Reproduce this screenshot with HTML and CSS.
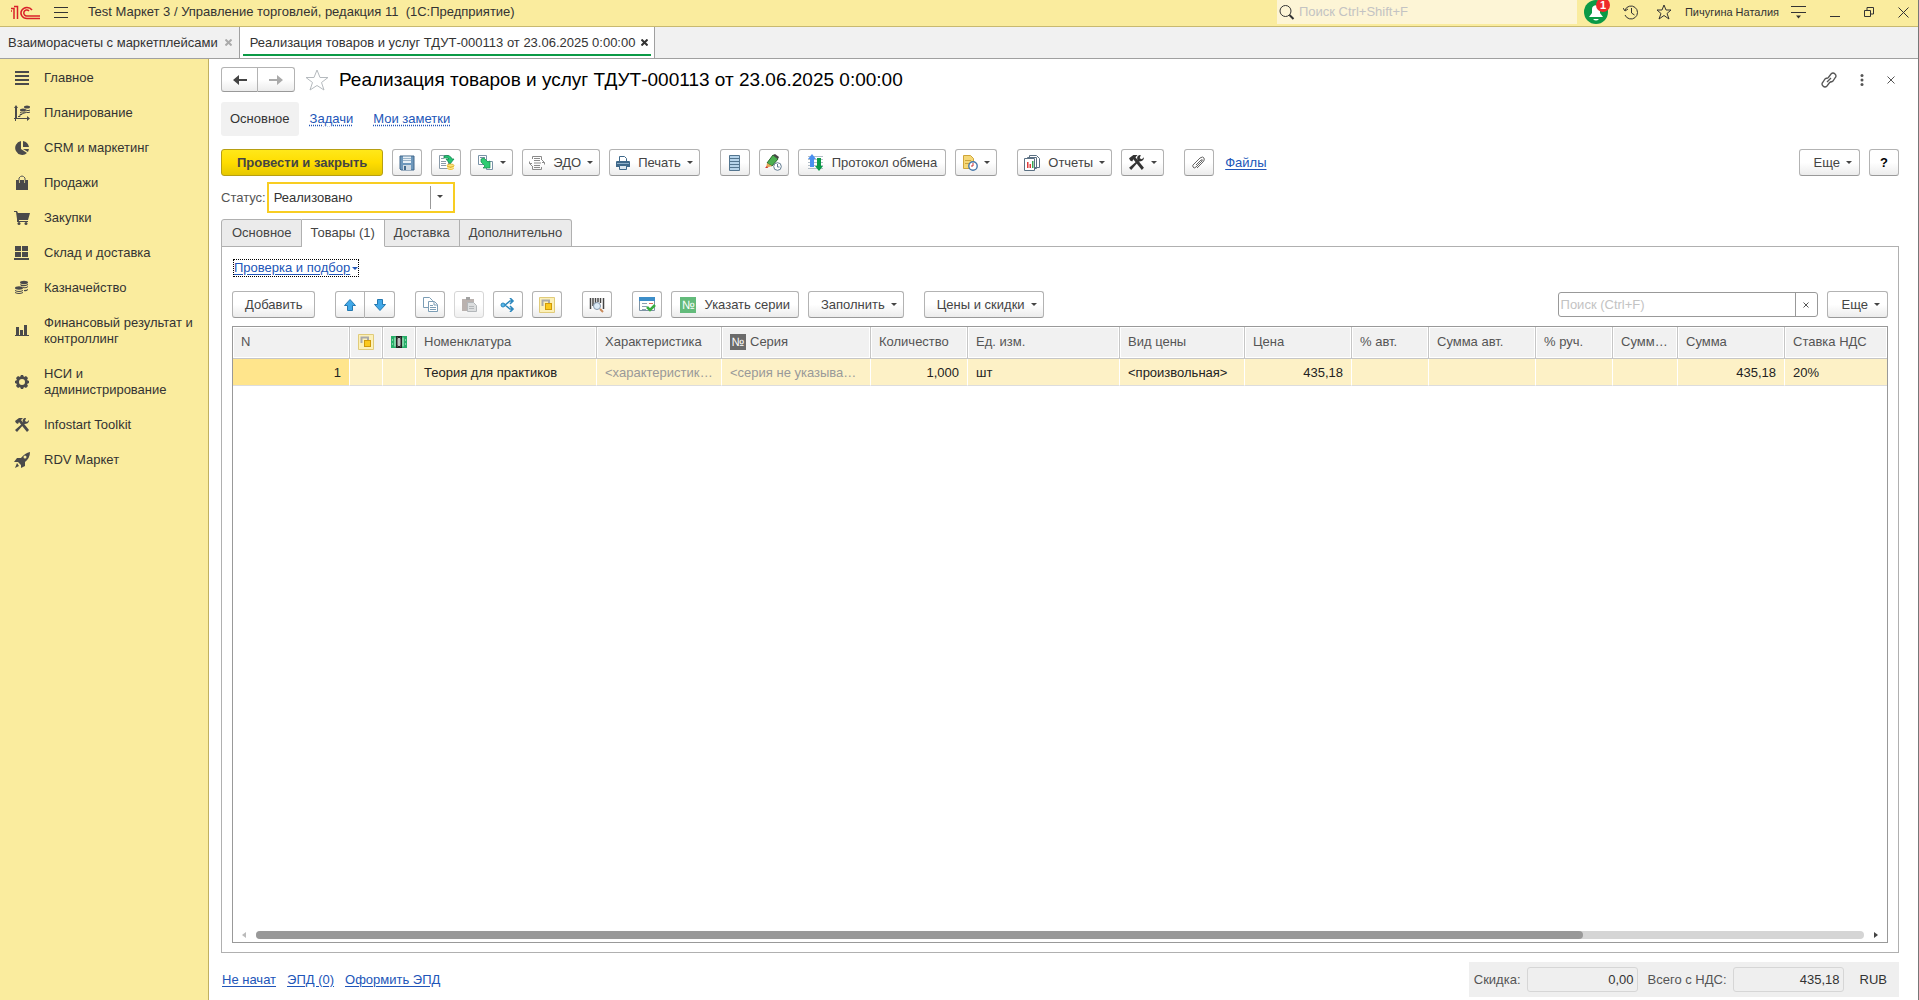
FILE: index.html
```html
<!DOCTYPE html>
<html lang="ru">

<head>
    <meta charset="UTF-8">
    <meta name="viewport" content="width=device-width, initial-scale=1.0">
    <title>Реализация товаров и услуг ТДУТ-000113</title>
    <link rel="stylesheet" href="styles.css">
</head>

<body>
    <!-- Shared icons -->
    <svg class="sprite" aria-hidden="true">
        <symbol id="i-lock" viewBox="0 0 16 16">
            <path d="M.5.5h15v15H.5z" fill="#fcf0b8" stroke="#e0cb7a" />
            <path d="M3.500 9V3.500H10V6" fill="none" stroke="#a9a9a9" stroke-width="2" />
            <rect x="6.500" y="6.500" width="6" height="6" fill="#fbc91c" stroke="#cf9a08" />
        </symbol>
        <symbol id="i-tools" viewBox="0 0 16 16">
            <path d="M1 4l4-3h4L7 3l8 10-2 2L5 5 4 7 2 6z" />
            <path d="M15 3l-2 2-2-1 1-3C9 1 8 3 9 6L1 13l2 2 7-8c3 0 5-1 5-4z" />
        </symbol>
    </svg>

    <header class="topbar">
        <svg class="logo" viewBox="0 0 30 15" fill="none" stroke="#d9202a" stroke-width="1.500">
            <path d="M1 3.500h3V14M1 6h1M4 1.500h3.500V14M22 5a6 5.500 0 1 0-5 8.500h13M19 6a3 3 0 1 0-2 5h13" />
        </svg>
        <button class="plain" aria-label="Меню">
            <svg width="14" height="13" viewBox="0 0 14 13" stroke="#333"><path d="M0 1.500h14M0 6.500h14M0 11.500h14" /></svg>
        </button>
        <h1 class="app-title">Test Маркет 3 / Управление торговлей, редакция 11 &nbsp;(1С:Предприятие)</h1>
        <div class="top-search">
            <svg width="16" height="16" viewBox="0 0 16 16" fill="none" stroke="#333"><circle cx="6.500" cy="7" r="5.500" /><path d="M10.500 11l4 4" stroke-width="2" /></svg>
            <input type="text" aria-label="Поиск" placeholder="Поиск Ctrl+Shift+F">
        </div>
        <button class="bell" aria-label="Уведомления">
            <svg width="24" height="24" viewBox="0 0 24 24"><circle cx="12" cy="12" r="12" fill="#0b9a46" /><path d="M5 17l3-4V9c0-5 8-5 8 0v4l3 4z" fill="#fff" /><path d="M9 19h6q-3 3-6 0z" fill="#fff" /></svg>
            <span class="badge">1</span>
        </button>
        <div class="top-icons">
            <button class="plain" aria-label="История">
                <svg width="16" height="16" viewBox="0 0 16 16" fill="none" stroke="#333"><path d="M2 6a6.500 6.500 0 1 1 0 5M0 4l2 3 3-2M8.500 4v5l3 2" /></svg>
            </button>
            <button class="plain" aria-label="Избранное">
                <svg width="16" height="16" viewBox="0 0 16 16" fill="none" stroke="#333"><path d="M8 1l2 5h5l-4 3.500 2 5.500-5-3.500L3 15l2-5.500L1 6h5z" /></svg>
            </button>
        </div>
        <a class="user" href="#">Пичугина Наталия</a>
        <div class="window-icons">
            <button class="plain" aria-label="Настройки">
                <svg width="15" height="14" viewBox="0 0 15 14" stroke="#333"><path d="M0 1.500h15M0 7.500h15" /><path d="M5 10.500h5l-2.500 3z" fill="#333" stroke="none" /></svg>
            </button>
            <button class="plain" aria-label="Свернуть">
                <svg width="10" height="14" viewBox="0 0 10 14" stroke="#333"><path d="M0 11.500h10" /></svg>
            </button>
            <button class="plain" aria-label="Восстановить">
                <svg width="10" height="10" viewBox="0 0 10 10" fill="none" stroke="#333"><path d="M.5 3.500h6v6h-6zM3 3V.5h6.500V7H7" /></svg>
            </button>
            <button class="plain" aria-label="Закрыть">
                <svg width="11" height="11" viewBox="0 0 11 11" stroke="#333"><path d="M.5.5l10 10M10.500.5l-10 10" /></svg>
            </button>
        </div>
    </header>

    <nav class="window-tabs">
        <div class="window-tab">
            <a href="#">Взаиморасчеты с маркетплейсами</a>
            <button class="tab-close" aria-label="Закрыть"><svg width="7" height="7" viewBox="0 0 7 7"><path d="M.5.5l6 6M6.500.5l-6 6" /></svg></button>
        </div>
        <div class="window-tab active">
            <a href="#">Реализация товаров и услуг ТДУТ-000113 от 23.06.2025 0:00:00</a>
            <button class="tab-close" aria-label="Закрыть"><svg width="7" height="7" viewBox="0 0 7 7"><path d="M.5.5l6 6M6.500.5l-6 6" /></svg></button>
        </div>
    </nav>

    <div class="workspace">
        <nav class="sidebar">
            <a href="#"><svg viewBox="0 0 16 16"><path d="M1 1h14v2H1zM1 5h14v2H1zM1 9h14v2H1zM1 13h14v2H1z" /></svg>Главное</a>
            <a href="#"><svg viewBox="0 0 16 16"><path d="M2 3h1v10h10v-2l3 2.500-3 2.500v-2H2v2H1v-2H0v-1h1V3H0l2-3 2 3z" /><path d="M4 11.500h2v-2h2l3-3" fill="none" stroke="#4a4a4a" /><ellipse cx="9" cy="5" rx="3" ry="1.500" /><ellipse cx="13" cy="2" rx="3" ry="1.500" /><path d="M12 4.500q2 1 4 0v1q-2 1-4 0zM12 6.500q2 1 4 0v1q-2 1-4 0zM6 7q3 1 6 0v1q-3 1-6 0z" /></svg>Планирование</a>
            <a href="#"><svg viewBox="0 0 16 16"><path d="M7 1v8l6 4A7 7 0 1 1 7 1z" /><path d="M9 1q5 1 6 6H9zM9 9h6l-1 3z" /></svg>CRM и маркетинг</a>
            <a href="#"><svg viewBox="0 0 16 16"><path d="M2 5h12v10H2z" /><path d="M5 8V3q3-4 6 0v5" fill="none" stroke="#555" /><path d="M5.500 5v3m5-3v3" stroke="#faec9e" stroke-width=".7" /></svg>Продажи</a>
            <a href="#"><svg viewBox="0 0 16 16"><path d="M0 1h3l1 2h12l-2 7H5v1h9v1H3V9L2 2H0z" /><circle cx="5" cy="13.500" r="1.500" /><circle cx="12" cy="13.500" r="1.500" /></svg>Закупки</a>
            <a href="#"><svg viewBox="0 0 16 16"><path d="M1 1h6v5H1zM8 1h6v5H8zM1 7h6v5H1zM8 7h6v5H8zM0 13h15v2H0z" /></svg>Склад и доставка</a>
            <a href="#"><svg viewBox="0 0 16 16"><ellipse cx="10" cy="2.500" rx="4" ry="1.700" /><ellipse cx="5" cy="8" rx="4" ry="1.700" /><path d="M6 4q4 2 8 0v1q-3 2-7 1zM9 7q3 1 5-1v1q-2 2-5 1zM10 10q3 0 4-1v1q-2 2-4 1zM1 10q4 2 8 0v1q-4 2-8 0zM1 12q4 2 8 0v1q-4 2-8 0z" /></svg>Казначейство</a>
            <a href="#"><svg viewBox="0 0 16 16"><path d="M2 4h3v8H2zM6 7h3v5H6zM10 2h3v10h-3zM1 12h14v1H1z" /></svg>Финансовый результат и контроллинг</a>
            <a href="#"><svg viewBox="0 0 16 16"><path fill-rule="evenodd" d="M6 3l1-2h2l1 2 2-1 2 2-1 2 2 1v2l-2 1 1 2-2 2-2-1-1 2H7l-1-2-2 1-2-2 1-2-2-1V7l2-1-1-2 2-2zM8 5a3 3 0 1 0 0 6 3 3 0 0 0 0-6z" /></svg>НСИ и администрирование</a>
            <a href="#"><svg viewBox="0 0 16 16"><use href="#i-tools" /></svg>Infostart Toolkit</a>
            <a href="#"><svg viewBox="0 0 16 16"><path fill-rule="evenodd" d="M16 0q0 6-5 10v4l-4 2v-3L4 10H0l3-4h4q4-5 9-6zM11 3.500a1.500 1.500 0 1 0 0 3 1.500 1.500 0 0 0 0-3z" /><path d="M3 11l2 3-4 2z" /></svg>RDV Маркет</a>
        </nav>

        <main class="form">
            <div class="form-head">
                <div class="btn-group nav-group">
                    <button class="btn" aria-label="Назад"><svg width="14" height="12" viewBox="0 0 14 12" fill="#444"><path d="M0 6l6-5v4h8v2H6v4z" /></svg></button>
                    <button class="btn" aria-label="Вперед"><svg width="14" height="12" viewBox="0 0 14 12" fill="#aaa"><path d="M14 6L8 1v4H0v2h8v4z" /></svg></button>
                </div>
                <button class="plain" aria-label="В избранное">
                    <svg width="24" height="22" viewBox="0 0 24 22" fill="none" stroke="#b5babe"><path d="M12 1l3 7.500h8l-6.500 5L19 21l-7-4.500L5 21l2.500-7.500L1 8.500h8z" /></svg>
                </button>
                <h2>Реализация товаров и услуг ТДУТ-000113 от 23.06.2025 0:00:00</h2>
                <div class="form-tools">
                    <button class="plain" aria-label="Ссылка"><svg width="16" height="16" viewBox="0 0 16 16" fill="none" stroke="#555" stroke-width="1.300"><path d="M7 6l3-4q2-2 4 0t0 4l-2 3q-1 1-3 1M9 10l-3 4q-2 2-4 0t0-4l2-3q1-1 3-1M6 10l4-4" /></svg></button>
                    <button class="plain" aria-label="Дополнительно"><svg width="4" height="12" viewBox="0 0 4 12" fill="#555"><circle cx="2" cy="1.500" r="1.500" /><circle cx="2" cy="6" r="1.500" /><circle cx="2" cy="10.500" r="1.500" /></svg></button>
                    <button class="plain" aria-label="Закрыть форму"><svg width="8" height="8" viewBox="0 0 8 8" stroke="#555"><path d="M.5.5l7 7M7.500.5l-7 7" /></svg></button>
                </div>
            </div>

            <nav class="form-nav">
                <a class="current" href="#">Основное</a>
                <a href="#">Задачи</a>
                <a href="#">Мои заметки</a>
            </nav>

            <div class="toolbar">
                <button class="btn primary">Провести и закрыть</button>
                <button class="btn icon" aria-label="Записать"><svg width="16" height="16" viewBox="0 0 16 16"><path d="M1 1h14v14H2l-1-1z" fill="#6e98bc" stroke="#42698c" /><path d="M4 1.500h8V8H4z" fill="#e8f0f6" /><path d="M4 3.500h8M4 5.500h8" stroke="#9bb4c8" /><path d="M4 10h8v5H4z" fill="#cfdae3" /><path d="M5 11h2v4H5z" fill="#42698c" /></svg></button>
                <button class="btn icon" aria-label="Провести"><svg width="17" height="17" viewBox="0 0 17 17"><path d="M1.500 1.500h9v13h-9z" fill="#fff" stroke="#8a9aa8" /><path d="M3 4.500h3M3 7.500h5M3 9.500h5M3 11.500h5" stroke="#8a9aa8" /><path d="M6 2q6-2 8 3h2l-4 5-4-5h3q-1-2-5-1z" fill="#22c573" stroke="#14864f" stroke-width=".8" /><path d="M9 11.500v3q3.500 3 7 0v-3z" fill="#f1c232" /><ellipse cx="12.500" cy="11.500" rx="3.500" ry="1.500" fill="#fbe27a" stroke="#d4a017" stroke-width=".7" /><path d="M9 13.500q3.500 2 7 0" fill="none" stroke="#fff3b0" /></svg></button>
                <button class="btn menu" aria-label="Создать на основании"><svg width="17" height="17" viewBox="0 0 17 17"><path d="M1.500 1.500h8v9h-8zM9.500 7.500h6v8h-6z" fill="#fff" stroke="#7992a6" /><path d="M3 3.500h5" stroke="#7992a6" /><path d="M4 5l3-1 4 4 2-1v7H6l2-2-4-4z" fill="#2ecc71" stroke="#14864f" stroke-width=".7" /></svg><i class="caret"></i></button>
                <button class="btn menu"><svg width="16" height="16" viewBox="0 0 16 16" fill="none" stroke="#8b8b8b"><path d="M3.500 4V1.500h9V5M3.500 11v3.500h9V12M5 3.500h6M5 5.500h6M5 8h7M5 10.500h6M5 12.500h6M3 8.500H.5v-2M.5 8.500L3 11M13 7.500h2.500v2M15.500 7.500L13 5" /></svg>ЭДО<i class="caret"></i></button>
                <button class="btn menu"><svg width="14" height="14" viewBox="0 0 14 14"><path d="M3.500.5h5l2 2V6h-7z" fill="#fff" stroke="#3e688a" /><path d="M0 6q0-1 1-1h12q1 0 1 1v5H0z" fill="#3e688a" /><path d="M1 7.500h12" stroke="#8fb0ca" /><path d="M3.500 9.500h7v4h-7z" fill="#dbe7f0" stroke="#3e688a" /></svg>Печать<i class="caret"></i></button>

                <button class="btn icon gap" aria-label="Реестр"><svg width="11" height="16" viewBox="0 0 11 16"><path d="M.5.5h10v15H.5z" fill="#b5d3ea" stroke="#53758f" /><path d="M1 3.500h9M1 6.500h9M1 9.500h9M1 12.500h9" stroke="#53758f" /></svg></button>
                <button class="btn icon" aria-label="Изменить"><svg width="17" height="17" viewBox="0 0 17 17"><path d="M8 1l5 4-6 7-5-3z" fill="#4caf50" stroke="#286b2c" /><path d="M8 1l2-1 4 3-1 2z" fill="#444" /><path d="M2 9l5 3-6 2z" fill="#e6a756" /><path d="M0 14l2-2 1 2z" fill="#c33" /><circle cx="12.500" cy="12.500" r="3.800" fill="#fff" stroke="#617b91" /><path d="M12.500 10v3h2" fill="none" stroke="#617b91" /></svg></button>
                <button class="btn menu labelled"><svg width="17" height="17" viewBox="0 0 17 17"><path d="M1 2.500h15M1 5.500h15M1 8.500h15M1 11.500h15M1 14.500h15" stroke="#b3bec7" /><path d="M5 0l4 5H7v8H3V5H1z" fill="#4a90f0" /><path d="M12 17l4-5h-2V4h-4v8H8z" fill="#0b9a46" /></svg>Протокол обмена</button>
                <button class="btn menu" aria-label="Задачи"><svg width="16" height="17" viewBox="0 0 16 17"><path d="M1.500 1.500h7l3 3v10h-10z" fill="#f5d878" stroke="#cfa53a" /><path d="M3 6.500h6M3 9.500h5" stroke="#cfa53a" /><circle cx="11" cy="12" r="4.200" fill="#fff" stroke="#4576a8" stroke-width="1.400" /><path d="M11 9v3H9" fill="none" stroke="#c33" /></svg><i class="caret"></i></button>

                <button class="btn menu gap"><svg width="16" height="16" viewBox="0 0 16 16"><path d="M5.500.5h7l3 3v9h-10zM3.500 2.500h9v11h-9z" fill="#fff" stroke="#5b7083" /><path d="M.5 3.500h10v12H.5z" fill="#fff" stroke="#5b7083" /><path d="M3 13V7h1.500v6z" fill="#e03b3b" /><path d="M5.500 13V9H7v4z" fill="#e03b3b" /><path d="M8 13V6h1.500v7z" fill="#3aa655" /></svg>Отчеты<i class="caret"></i></button>
                <button class="btn menu" aria-label="Сервис"><svg width="17" height="17" viewBox="0 0 16 16" fill="#333"><use href="#i-tools" /></svg><i class="caret"></i></button>

                <button class="btn icon gap" aria-label="Вложения"><svg width="14" height="14" viewBox="0 0 14 14" fill="none" stroke="#666"><path d="M4 9l5-5q2-1 1 1l-6 6q-2 2-3 0t1-3l6-6q3-2 4 0t-1 4l-6 6" /></svg></button>
                <a class="link" href="#">Файлы</a>

                <button class="btn menu right more">Еще<i class="caret"></i></button>
                <button class="btn icon help" aria-label="Справка">?</button>
            </div>

            <div class="status">
                <label for="status">Статус:</label>
                <div class="select">
                    <select id="status">
                        <option>Реализовано</option>
                    </select>
                    <i class="caret"></i>
                </div>
            </div>

            <nav class="page-tabs">
                <button>Основное</button>
                <button class="active">Товары (1)</button>
                <button>Доставка</button>
                <button>Дополнительно</button>
            </nav>

            <section class="page">
                <a class="check-link" href="#"><span>Проверка и подбор</span><i class="caret"></i></a>

                <div class="toolbar">
                    <button class="btn add">Добавить</button>
                    <div class="btn-group gap">
                        <button class="btn icon" aria-label="Вверх"><svg width="12" height="12" viewBox="0 0 12 12"><path d="M6 .5l5.500 6H8.500v5h-5v-5H.5z" fill="#41a8e8" stroke="#2478b0" /></svg></button>
                        <button class="btn icon" aria-label="Вниз"><svg width="12" height="12" viewBox="0 0 12 12"><path d="M6 11.500l5.500-6H8.500v-5h-5v5H.5z" fill="#41a8e8" stroke="#2478b0" /></svg></button>
                    </div>
                    <button class="btn icon gap" aria-label="Скопировать"><svg width="15" height="15" viewBox="0 0 15 15" fill="#fff" stroke="#7b9db5"><path d="M.5.5h6l3 3v7h-9z" /><path d="M5.500 4.500h6l3 3v7h-9zM11 5v3h3M7 8.500h3M7 10.500h6M7 12.500h6" /></svg></button>
                    <button class="btn icon" aria-label="Вставить" disabled><svg width="15" height="15" viewBox="0 0 15 15"><path d="M0 2h12v12H0z" fill="#aaa09c" /><path d="M4 0h4v3H4z" fill="#8c8c8c" /><path d="M5.500 5.500h6l3 3v6h-9z" fill="#d4d6d8" stroke="#a1a6aa" /><path d="M7 9.500h5M7 11.500h5" stroke="#a1a6aa" /></svg></button>
                    <button class="btn icon" aria-label="Разбить строку"><svg width="16" height="14" viewBox="0 0 16 14" fill="none" stroke="#2b87bd" stroke-width="1.600"><path d="M2 7h3l5-4h3M5 7l5 4h3M10 0l3 3-3 3M10 8l3 3-3 3" /><circle cx="3" cy="7" r="2" fill="#56b7ea" stroke-width="1" /></svg></button>
                    <button class="btn icon" aria-label="Резервы"><svg width="16" height="16"><use href="#i-lock" /></svg></button>
                    <button class="btn icon gap" aria-label="Поиск по штрихкоду"><svg width="16" height="16" viewBox="0 0 16 16"><path d="M1.500 1v11M4 1v8M6.500 1v6M9 1v4M11.500 1v5M14.500 1v11" stroke="#444" stroke-width="1.500" /><circle cx="8" cy="9" r="3.500" fill="#dcebf7" stroke="#8296ab" /><path d="M11 12l3 3" stroke="#c98a5a" stroke-width="2" /></svg></button>
                    <button class="btn icon gap" aria-label="Проверить"><svg width="17" height="15" viewBox="0 0 17 15"><path d="M.5.5h15v13H.5z" fill="#fff" stroke="#7e93a5" /><path d="M0 0h16v4H0z" fill="#3d8ec9" /><path d="M3 6.500h5M3 9.500h5M3 12.500h4" stroke="#8ba0b1" /><path d="M10 6.500h4" stroke="#d86a5a" /><path d="M8 10l3 3 5-5" fill="none" stroke="#39ad3f" stroke-width="2.500" /></svg></button>
                    <button class="btn menu labelled"><span class="num green">№</span>Указать серии</button>
                    <button class="btn menu wide">Заполнить<i class="caret"></i></button>
                    <button class="btn menu wide gap">Цены и скидки<i class="caret"></i></button>
                    <div class="list-search right">
                        <input type="text" aria-label="Поиск в списке" placeholder="Поиск (Ctrl+F)">
                        <button aria-label="Очистить"><svg width="6" height="6" viewBox="0 0 6 6" stroke="#555"><path d="M.5.5l5 5M5.500.5l-5 5" /></svg></button>
                    </div>
                    <button class="btn menu more">Еще<i class="caret"></i></button>
                </div>

                <div class="grid">
                    <table>
                        <colgroup>
                            <col class="c-n"><col class="c-ico"><col class="c-ico"><col class="c-name"><col class="c-char"><col class="c-serial"><col class="c-qty"><col class="c-unit"><col class="c-kind"><col class="c-sum"><col class="c-pct"><col class="c-sum"><col class="c-pct"><col class="c-short"><col class="c-sum"><col>
                        </colgroup>
                        <thead>
                            <tr>
                                <th>N</th>
                                <th class="ico"><svg width="16" height="16"><use href="#i-lock" /></svg></th>
                                <th class="ico"><svg width="16" height="12" viewBox="0 0 16 12"><path d="M0 0h16v12H0z" fill="#27ae68" /><path d="M3 1.500h10v9H3z" fill="#7ed3a5" /><path d="M1.500 3v6M14.500 3v6" stroke="#7ed3a5" stroke-dasharray="2 2" /><path d="M5 0h6v12H5z" fill="#222" /><path d="M6.500 2l3 2-3 2 3 2-3 2M9.500 2l-3 2 3 2-3 2 3 2" fill="none" stroke="#fff" stroke-width=".8" /></svg></th>
                                <th>Номенклатура</th>
                                <th>Характеристика</th>
                                <th><span class="num">№</span>Серия</th>
                                <th>Количество</th>
                                <th>Ед. изм.</th>
                                <th>Вид цены</th>
                                <th>Цена</th>
                                <th>% авт.</th>
                                <th>Сумма авт.</th>
                                <th>% руч.</th>
                                <th>Сумма руч.</th>
                                <th>Сумма</th>
                                <th>Ставка НДС</th>
                            </tr>
                        </thead>
                        <tbody>
                            <tr>
                                <td class="number selected">1</td>
                                <td></td>
                                <td></td>
                                <td>Теория для практиков</td>
                                <td class="muted">&lt;характеристика&gt;</td>
                                <td class="muted">&lt;серия не указывается&gt;</td>
                                <td class="number">1,000</td>
                                <td>шт</td>
                                <td>&lt;произвольная&gt;</td>
                                <td class="number">435,18</td>
                                <td></td>
                                <td></td>
                                <td></td>
                                <td></td>
                                <td class="number">435,18</td>
                                <td>20%</td>
                            </tr>
                        </tbody>
                    </table>
                    <div class="scroll">
                        <svg width="4" height="6" viewBox="0 0 4 6" fill="#bbb"><path d="M4 0v6L0 3z" /></svg>
                        <div class="track"><div class="thumb"></div></div>
                        <svg width="4" height="6" viewBox="0 0 4 6" fill="#444"><path d="M0 0v6l4-3z" /></svg>
                    </div>
                </div>
            </section>

            <footer class="form-foot">
                <a class="link" href="#">Не начат</a>
                <a class="link" href="#">ЭПД (0)</a>
                <a class="link" href="#">Оформить ЭПД</a>
                <div class="totals">
                    <label for="discount">Скидка:</label>
                    <input id="discount" type="text" value="0,00" readonly>
                    <label for="total">Всего с НДС:</label>
                    <input id="total" type="text" value="435,18" readonly>
                    <span class="currency">RUB</span>
                </div>
            </footer>
        </main>
    </div>
</body>

</html>
```
FILE: styles.css
```css
* {
    box-sizing: border-box;
}

body {
    margin: 0;
    height: 100vh;
    display: flex;
    flex-direction: column;
    font-family: "Liberation Sans", Arial, sans-serif;
    font-size: 13px;
    line-height: 16px;
    color: #333;
    background: #fff;
    border-right: 1px solid #777;
}

button,
input,
select {
    font: inherit;
    color: inherit;
}

svg {
    flex: none;
    display: block;
}

.sprite {
    position: absolute;
    width: 0;
    height: 0;
}

.plain {
    display: flex;
    padding: 0;
    border: none;
    background: none;
}

.caret {
    flex: none;
    border: 3px solid transparent;
    border-top-color: #444;
    border-bottom: none;
}

/* Title bar */
.topbar {
    display: flex;
    align-items: center;
    height: 27px;
    padding: 0 9px 2px 10px;
    background: #faec9e;
    border-bottom: 1px solid #c8b970;
}

.logo {
    width: 30px;
    height: 15px;
    margin-right: 14px;
}

.app-title {
    margin: 0 auto 0 20px;
    font-size: 13px;
    font-weight: normal;
}

.top-search {
    display: flex;
    align-items: center;
    gap: 4px;
    width: 300px;
    height: 24px;
    margin-right: 7px;
    padding: 0 2px;
    background: #fdf5d6;
}

.top-search input {
    flex: 1;
    min-width: 0;
    padding: 0;
    border: none;
    background: none;
}

input::placeholder {
    color: #c3c3c3;
    opacity: 1;
}

.bell {
    position: relative;
    padding: 0;
    border: none;
    background: none;
}

.badge {
    position: absolute;
    top: -2px;
    right: -2px;
    width: 14px;
    height: 14px;
    border-radius: 7px;
    background: #ee2a2a;
    color: #fff;
    font-size: 11px;
    font-weight: bold;
    line-height: 14px;
}

.top-icons {
    display: flex;
    gap: 17px;
    margin: 0 13px 0 15px;
}

.user {
    color: #333;
    font-size: 11px;
    text-decoration: none;
}

.window-icons {
    display: flex;
    align-items: center;
    gap: 24px;
    margin-left: 12px;
}

/* Open windows */
.window-tabs {
    display: flex;
    height: 32px;
    background: #f1f1f1;
    border-bottom: 1px solid #a0a0a0;
}

.window-tab {
    display: flex;
    align-items: center;
    gap: 7px;
    padding: 0 7px 0 8px;
    border-right: 1px solid #a0a0a0;
}

.window-tab a {
    color: #333;
    text-decoration: none;
}

.window-tab.active {
    gap: 6px;
    padding: 0 6px 0 10px;
    background: linear-gradient(#0b9a46, #0b9a46) no-repeat center bottom 2px / calc(100% - 6px) 2px #fff;
}

.tab-close {
    padding: 0;
    border: none;
    background: none;
    stroke: #aaa;
    stroke-width: 2;
}

.active .tab-close {
    stroke: #333;
}

.workspace {
    flex: 1;
    display: flex;
    min-height: 0;
}

/* Sections panel */
.sidebar {
    flex: none;
    width: 209px;
    padding-top: 2px;
    background: #faec9e;
    border-right: 1px solid #c0b060;
}

.sidebar a {
    display: flex;
    align-items: center;
    gap: 14px;
    padding: 9px 14px 10px;
    color: #333;
    text-decoration: none;
}

.sidebar svg {
    width: 16px;
    height: 16px;
    fill: #4a4a4a;
}

/* Document form */
.form {
    flex: 1;
    display: flex;
    flex-direction: column;
    min-width: 0;
    padding: 8px 19px 3px 12px;
}

.form-head {
    display: flex;
    align-items: center;
    height: 25px;
}

.form-head h2 {
    margin: 0 auto 0 10px;
    color: #000;
    font-size: 19px;
    font-weight: normal;
    line-height: 24px;
}

.form-tools {
    display: flex;
    align-items: center;
    gap: 23px;
    padding-right: 4px;
}

.btn-group {
    display: flex;
}

.btn-group .btn:first-child {
    border-radius: 3px 0 0 3px;
}

.btn-group .btn:last-child {
    border-left: none;
    border-radius: 0 3px 3px 0;
}

.nav-group {
    margin-right: 10px;
}

.nav-group .btn {
    width: 37px;
    height: 25px;
}

.form-nav {
    display: flex;
    align-items: center;
    gap: 20px;
    height: 34px;
    margin-top: 10px;
}

.form-nav a {
    color: #2155b8;
    text-decoration: underline dotted;
    text-underline-offset: 2px;
}

.form-nav .current {
    margin-right: -9px;
    padding: 9px;
    border-radius: 3px;
    background: #f1f1f1;
    color: #333;
    text-decoration: none;
}

.toolbar {
    display: flex;
    align-items: center;
    gap: 9px;
}

.form > .toolbar {
    margin-top: 13px;
}

.btn {
    display: flex;
    align-items: center;
    justify-content: center;
    gap: 8px;
    height: 27px;
    padding: 0;
    border: 1px solid #b3b3b3;
    border-bottom-color: #999;
    border-radius: 3px;
    background: linear-gradient(#fff 50%, #ececec);
    color: #444;
    white-space: nowrap;
}

.btn .caret {
    margin-left: -2px;
}

.btn.icon {
    width: 30px;
}

.btn.menu {
    padding: 0 6px;
}

.btn.labelled {
    padding: 0 8px;
}

.btn.wide {
    padding: 0 6px 0 12px;
}

.btn.more {
    padding: 0 7px 0 14px;
}

.btn.add {
    padding: 0 12px;
}

.btn.primary {
    padding: 0 15px;
    border-color: #b79f12;
    background: linear-gradient(#ffe81a, #ffdd00 50%, #e6c800);
    font-weight: bold;
}

.btn.help {
    color: #000;
    font-weight: bold;
}

.btn:disabled {
    border-color: #ccc;
    opacity: 0.8;
}

.gap {
    margin-left: 11px;
}

.right {
    margin-left: auto;
}

.link {
    color: #2155b8;
    text-underline-offset: 2px;
}

.toolbar .link {
    margin-left: 2px;
}

.status {
    display: flex;
    align-items: center;
    gap: 1px;
    margin-top: 6px;
    color: #555;
}

.select {
    position: relative;
}

.select select {
    display: block;
    width: 188px;
    height: 31px;
    padding: 0 5px;
    appearance: none;
    border: 2px solid #f8cd22;
    border-radius: 0;
    background: linear-gradient(#999, #999) no-repeat right 22px center / 1px 23px #fff;
    color: #333;
}

.select .caret {
    position: absolute;
    top: 13px;
    right: 12px;
}

/* Pages of the form */
.page-tabs {
    position: relative;
    z-index: 1;
    display: flex;
    height: 28px;
    margin-top: 6px;
}

.page-tabs button {
    padding: 0 9px;
    border: 1px solid #b0b0b0;
    border-left: none;
    background: #ebebeb;
    color: #444;
}

.page-tabs button:first-child {
    padding-left: 10px;
    border-left: 1px solid #b0b0b0;
    border-top-left-radius: 3px;
}

.page-tabs button:last-child {
    border-top-right-radius: 3px;
}

.page-tabs .active {
    border-bottom-color: #fff;
    background: #fff;
}

.page {
    flex: 1;
    display: flex;
    flex-direction: column;
    min-height: 0;
    margin-top: -1px;
    padding: 12px 10px 9px;
    border: 1px solid #b0b0b0;
}

.check-link {
    display: flex;
    align-self: flex-start;
    align-items: center;
    gap: 2px;
    height: 18px;
    margin-left: 1px;
    border: 1px dotted #000;
    color: #2155b8;
    text-decoration: none;
}

.check-link span {
    text-decoration: underline;
    text-underline-offset: 2px;
}

.check-link .caret {
    border-top-color: #2155b8;
}

.page .toolbar {
    margin-top: 14px;
}

.num {
    width: 16px;
    height: 16px;
    background: #6b6b6b;
    color: #fff;
    font-size: 12px;
    text-align: center;
}

.num.green {
    background: #63bb7b;
}

.list-search {
    display: flex;
    width: 260px;
    height: 25px;
    border: 1px solid #999;
    border-radius: 3px;
}

.list-search input {
    flex: 1;
    min-width: 0;
    padding: 0 2px;
    border: none;
    background: none;
}

.list-search button {
    display: flex;
    align-items: center;
    justify-content: center;
    width: 22px;
    padding: 0;
    border: none;
    border-left: 1px solid #999;
    background: none;
}

/* Goods list */
.grid {
    flex: 1;
    display: flex;
    flex-direction: column;
    justify-content: space-between;
    min-height: 0;
    margin-top: 8px;
    border: 1px solid #999;
}

table {
    width: 100%;
    table-layout: fixed;
    border-collapse: separate;
    border-spacing: 0;
}

th,
td {
    height: 27px;
    padding: 0 8px;
    overflow: hidden;
    text-align: left;
    text-overflow: ellipsis;
    white-space: nowrap;
}

th {
    height: 32px;
    padding-bottom: 2px;
    border-right: 1px solid #c6c6c6;
    border-bottom: 1px solid #c6c6c6;
    background: #f1f1f1;
    box-shadow: inset 0 0 0 1px #fff;
    color: #555;
    font-weight: normal;
}

td {
    padding-top: 2px;
    border-right: 1px solid #fff;
    border-bottom: 1px solid #ddd;
    background: #fdf1c6;
    color: #222;
}

th:last-child,
td:last-child {
    border-right: none;
}

.ico {
    padding: 0 0 2px;
}

.ico svg {
    margin: auto;
}

th .num {
    display: inline-block;
    margin-right: 4px;
}

.number {
    text-align: right;
}

.selected {
    background: #ffe58c;
}

.muted {
    color: #999;
}

.c-n { width: 117px; }
.c-ico { width: 33px; }
.c-name { width: 181px; }
.c-char { width: 125px; }
.c-serial { width: 149px; }
.c-qty { width: 97px; }
.c-unit { width: 152px; }
.c-kind { width: 125px; }
.c-sum { width: 107px; }
.c-pct { width: 77px; }
.c-short { width: 65px; }

.scroll {
    display: flex;
    align-items: center;
    justify-content: space-between;
    gap: 10px;
    height: 14px;
    padding: 0 9px;
}

.track {
    flex: 1;
    height: 8px;
    border-radius: 4px;
    background: #d5d5d5;
}

.thumb {
    width: 82.5%;
    height: 8px;
    border-radius: 4px;
    background: #999;
}

/* Footer */
.form-foot {
    display: flex;
    align-items: center;
    gap: 11px;
    margin-top: 9px;
    padding-left: 1px;
}

.totals {
    display: flex;
    align-items: center;
    height: 35px;
    margin-left: auto;
    padding: 0 12px 0 5px;
    background: #efefef;
    color: #555;
}

.totals input {
    width: 111px;
    height: 25px;
    margin: 0 10px 0 6px;
    padding: 0 3px;
    border: 1px solid #d6d6d6;
    border-radius: 3px;
    background: none;
    color: #333;
    text-align: right;
}

.currency {
    margin-left: 6px;
    color: #333;
}
```
